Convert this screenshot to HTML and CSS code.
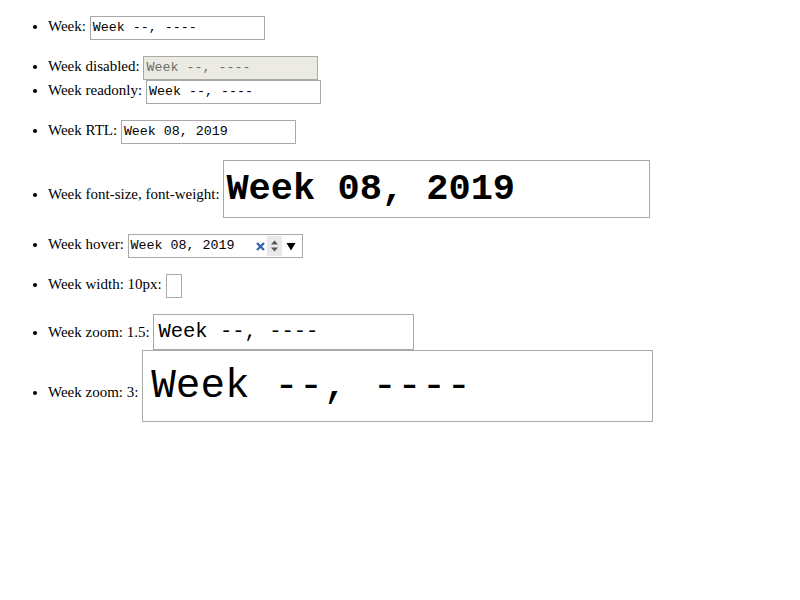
FILE: index.html
```html
<!DOCTYPE html>
<html>
<head>
<meta charset="utf-8">
<title>Week inputs</title>
<link rel="stylesheet" href="styles.css">
</head>
<body>
<ul class="list">
  <li class="item">Week: <span class="field">Week --, ----</span></li>
  <li class="item spaced">Week disabled: <span class="field disabled">Week --, ----</span></li>
  <li class="item">Week readonly: <span class="field">Week --, ----</span></li>
  <li class="item spaced">Week RTL: <span class="field">Week 08, 2019</span></li>
  <li class="item spaced">Week font-size, font-weight: <span class="field big">Week 08, 2019</span></li>
  <li class="item spaced">Week hover: <span class="field hover"><span class="value">Week 08, 2019</span><span class="controls"><svg class="clear" width="9" height="9" viewBox="0 0 9 9"><path d="M1 1L8 8M8 1L1 8" stroke="#2f62ad" stroke-width="2.2"/></svg><span class="spin"><svg width="9" height="16" viewBox="0 0 9 16"><path d="M4.5 2.5L8 6.5H1Z" fill="#555"/><path d="M1 9.5H8L4.5 13.5Z" fill="#555"/></svg></span><svg class="drop" width="10" height="9" viewBox="0 0 10 9"><path d="M0.5 1H9.5L5 8.5Z" fill="#000"/></svg></span></span></li>
  <li class="item spaced">Week width: 10px: <span class="field narrow"></span></li>
  <li class="item spaced">Week zoom: 1.5: <span class="field zoom15">Week --, ----</span></li>
  <li class="item">Week zoom: 3: <span class="field zoom3">Week --, ----</span></li>
</ul>
</body>
</html>
```
FILE: styles.css
```css
body {
  margin: 0 8px 8px;
  font-family: "Liberation Serif", "Times New Roman", serif;
  font-size: 15px;
  color: #000;
  background: #fff;
}

.list {
  margin: 16px 0;
  padding-left: 40px;
}

.item.spaced {
  margin-top: 16px;
}

.field {
  display: inline-block;
  box-sizing: border-box;
  width: 175px;
  height: 24px;
  padding: 0 2px;
  border: 1px solid #a9a9a9;
  font-family: "Liberation Mono", "Courier New", monospace;
  font-size: 13.33px;
  line-height: 22px;
  white-space: pre;
  vertical-align: baseline;
  background: #fff;
  color: #000;
}

.field.disabled {
  background: #ebebe4;
  color: #6d6d6d;
}

.field.big {
  width: 427px;
  height: 58px;
  font-size: 37px;
  font-weight: bold;
  line-height: 56px;
}

.field.hover {
  display: inline-flex;
  align-items: center;
  line-height: 22px;
}

.hover .value {
  flex: 1;
}

.controls {
  display: flex;
  align-items: center;
  height: 22px;
}

.clear {
  display: block;
  margin-right: 2px;
}

.spin {
  display: flex;
  align-items: center;
  justify-content: center;
  width: 15px;
  height: 20px;
  background: #e9e9e9;
}

.spin svg {
  display: block;
}

.drop {
  display: block;
  margin: 0 4px 0 4px;
}

.field.narrow {
  width: 16px;
}

.field.narrow::before {
  content: "\200b";
}

.field.zoom15 {
  width: 261px;
  height: 36px;
  padding: 0 4px;
  font-size: 20.5px;
  line-height: 34px;
}

.field.zoom3 {
  width: 511px;
  height: 72px;
  padding: 0 8px;
  font-size: 41px;
  line-height: 70px;
}
```
